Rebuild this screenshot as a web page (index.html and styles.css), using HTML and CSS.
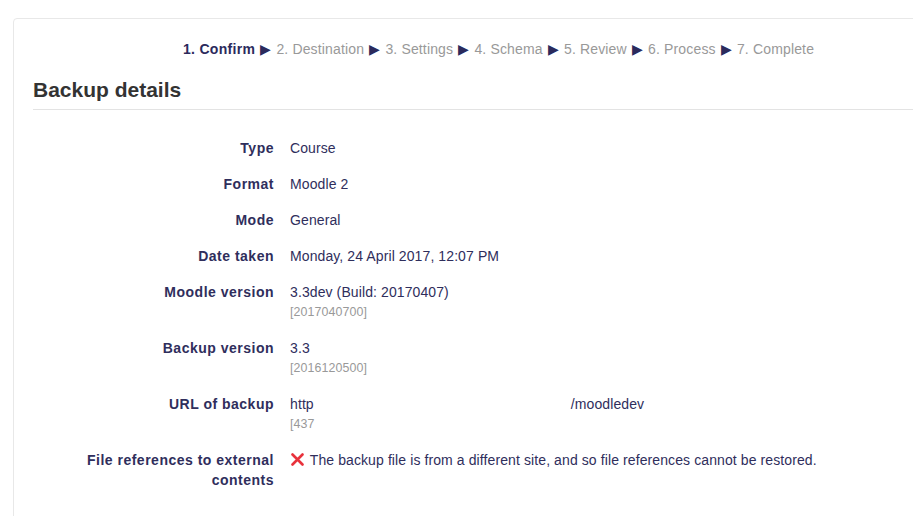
FILE: index.html
```html
<html><head>
<meta charset="UTF-8">
<meta name="viewport" content="width=device-width, initial-scale=1.0">
<title>Restore course</title>
<link rel="stylesheet" href="styles.css">
</head>
<body>
  <div class="card">
    <div class="steps">
      <span class="step current">1. Confirm</span>
      <span class="arrow">&#9654;</span>
      <span class="step">2. Destination</span>
      <span class="arrow">&#9654;</span>
      <span class="step">3. Settings</span>
      <span class="arrow">&#9654;</span>
      <span class="step">4. Schema</span>
      <span class="arrow">&#9654;</span>
      <span class="step">5. Review</span>
      <span class="arrow">&#9654;</span>
      <span class="step">6. Process</span>
      <span class="arrow">&#9654;</span>
      <span class="step">7. Complete</span>
    </div>

    <h2>Backup details</h2>

    <div class="details">
      <div class="label">Type</div>
      <div class="value">Course</div>

      <div class="label">Format</div>
      <div class="value">Moodle 2</div>

      <div class="label">Mode</div>
      <div class="value">General</div>

      <div class="label">Date taken</div>
      <div class="value">Monday, 24 April 2017, 12:07 PM</div>

      <div class="label">Moodle version</div>
      <div class="value">3.3dev (Build: 20170407)<span class="sub">[2017040700]</span></div>

      <div class="label">Backup version</div>
      <div class="value">3.3<span class="sub">[2016120500]</span></div>

      <div class="label">URL of backup</div>
      <div class="value">http<span class="hidden-part">/moodledev</span><span class="sub">[437</span></div>

      <div class="label">File references to external contents</div>
      <div class="value">
        <svg class="cross" width="13" height="13" viewBox="0 0 13 13"><path d="M1.5 1.5 L11.5 11.5 M11.5 1.5 L1.5 11.5" stroke="#e8323c" stroke-width="2.6" stroke-linecap="round"/></svg>
        The backup file is from a different site, and so file references cannot be restored.
      </div>
    </div>
  </div>
</body></html>
```

FILE: styles.css
```css
body {
  margin: 0;
  font-family: "Liberation Sans", Arial, sans-serif;
  font-size: 14px;
  line-height: 20px;
  color: #2f2e5c;
  background-color: #fff;
  overflow: hidden;
}
.card {
  margin: 18px 0 0 13px;
  width: 972px;
  height: 600px;
  border: 1px solid #e8e8e8;
  border-radius: 4px;
  padding: 20px 20px 0 19px;
  box-sizing: border-box;
  background-color: #fff;
}
.steps {
  text-align: center;
  color: #999;
  letter-spacing: 0.15px;
}
.steps .current {
  color: #2b2a5c;
  font-weight: bold;
  letter-spacing: 0.3px;
}
.steps .arrow {
  color: #2b2a5c;
  font-size: 14px;
  padding: 0 1px;
}
h2 {
  margin: 18px 0 0 0;
  font-size: 21px;
  line-height: 26px;
  font-weight: bold;
  color: #333;
  padding-bottom: 6px;
  border-bottom: 1px solid #e3e3e3;
}
.details {
  display: grid;
  grid-template-columns: 241px 1fr;
  column-gap: 16px;
  row-gap: 16px;
  margin-top: 28px;
}
.label {
  font-weight: bold;
  text-align: right;
  letter-spacing: 0.5px;
}
.value {
  letter-spacing: 0.1px;
}
.sub {
  display: block;
  font-size: 12.4px;
  color: #999;
}
.hidden-part {
  padding-left: 257px;
}
.cross {
  vertical-align: -1px;
  margin: 0 2px 0 1px;
}
```
